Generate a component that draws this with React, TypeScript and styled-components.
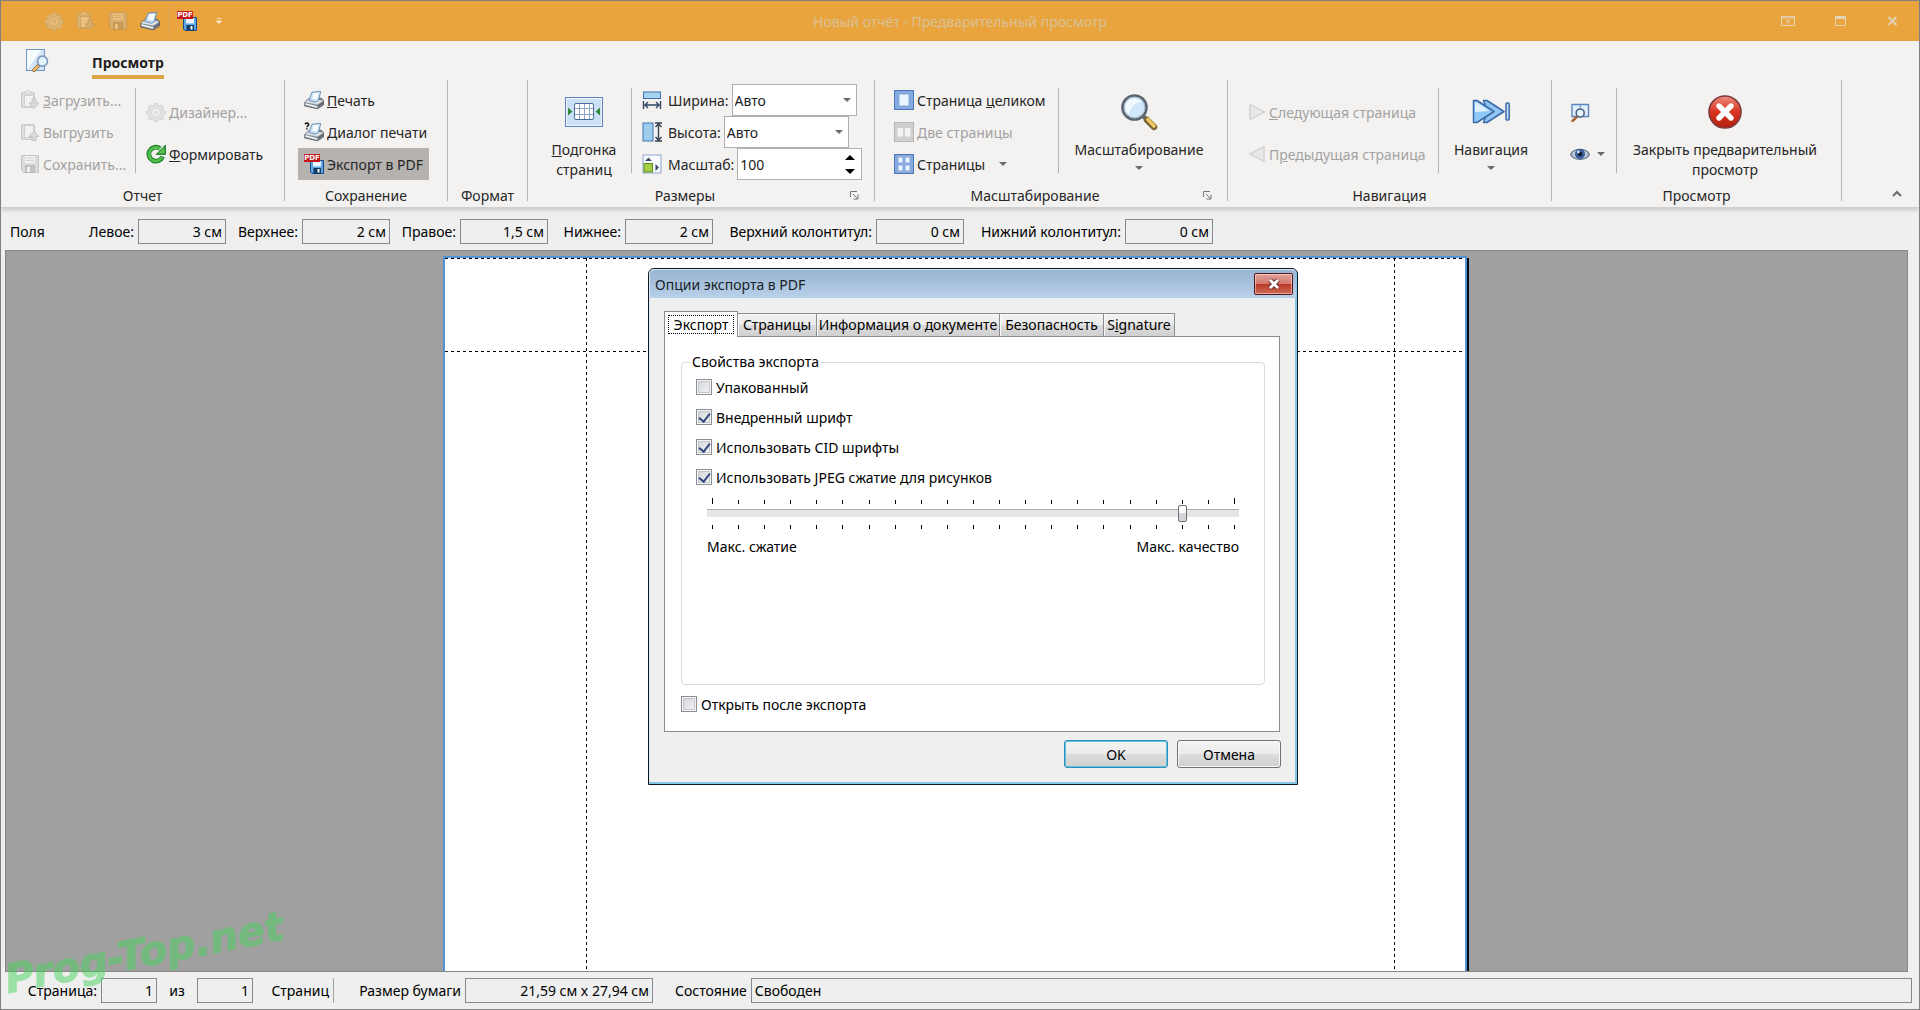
import React, { useState } from "react";
import styled, { createGlobalStyle, css } from "styled-components";

const uiFont = `"Noto Sans", "Open Sans", sans-serif`;

const GlobalStyle = createGlobalStyle`
  * { box-sizing: border-box; }
  body { margin: 0; background: #efefef; }
  button, input, select { font: inherit; color: inherit; margin: 0; }
  button { padding: 0; border: 0; background: none; cursor: default; }
`;

/* ---------- window frame ---------- */

const Window = styled.div`
  position: relative;
  display: flex;
  flex-direction: column;
  height: 100vh;
  overflow: hidden;
  border: 1px solid #808080;
  background: #efefef;
  font-family: ${uiFont};
  font-size: 14px;
  color: #262626;
`;

const TitleBar = styled.header`
  display: grid;
  grid-template-columns: 1fr auto 1fr;
  align-items: center;
  height: 40px;
  flex: none;
  background: #e9a43e;
`;

const QuickAccess = styled.div`
  display: flex;
  align-items: center;
  padding-left: 37px;
`;

const QuickButton = styled.button<{ $faded?: boolean }>`
  display: flex;
  justify-content: center;
  width: 32px;
  opacity: ${(p) => (p.$faded ? 0.35 : 1)};
`;

const QuickDivider = styled.span`
  width: 1px;
  height: 32px;
  margin: 0 2px;
  background: #dda85a;
`;

const WindowTitle = styled.h1`
  margin: 0;
  font-size: 14px;
  font-weight: 400;
  color: #d9c196;
`;

const WindowButtons = styled.div`
  display: flex;
  justify-content: flex-end;
  padding-right: 1px;
`;

const WindowButton = styled.button`
  display: flex;
  align-items: center;
  justify-content: center;
  width: 52px;
  height: 40px;
  color: #e3d3b5;
`;

/* ---------- ribbon ---------- */

const Ribbon = styled.section`
  flex: none;
  background: #f3f2f1;
  border-bottom: 1px solid #d0d0d0;
  box-shadow: 0 2px 4px rgba(0, 0, 0, 0.16);
  z-index: 1;
`;

const TabRow = styled.div`
  display: flex;
  height: 39px;
  padding: 0 0 1px 24px;
`;

const FileButton = styled.button`
  display: flex;
  align-items: center;
  width: 67px;
`;

const RibbonTab = styled.button`
  align-self: flex-end;
  height: 28px;
  border-bottom: 4px solid #dda548;
  font-size: 14px;
  font-weight: 700;
  line-height: 20px;
  color: #1c1c1c;
`;

const Groups = styled.div`
  display: flex;
  height: 127px;
`;

const Group = styled.div<{ $width: number }>`
  display: flex;
  flex-direction: column;
  flex: none;
  width: ${(p) => p.$width}px;
  margin-bottom: 6px;
  border-right: 1px solid #b5b5b5;
`;

const GroupBody = styled.div`
  display: flex;
  flex: none;
  height: 105px;
  padding-top: 4px;
`;

const GroupFooter = styled.div`
  display: flex;
  flex: none;
  align-items: center;
  height: 20px;
`;

const GroupTitle = styled.span`
  flex: 1;
  text-align: center;
`;

const Launcher = styled.button`
  display: flex;
  justify-content: center;
  width: 32px;
  padding-right: 8px;
`;

const Column = styled.div<{ $left: number; $width?: number; $pair?: boolean }>`
  display: flex;
  flex: none;
  flex-direction: column;
  align-items: flex-start;
  width: ${(p) => (p.$width ? `${p.$width}px` : "auto")};
  padding-left: ${(p) => p.$left}px;
  ${(p) => p.$pair && css`padding-top: 12px; gap: 10px;`}
`;

const Divider = styled.span`
  flex: none;
  width: 1px;
  height: 85px;
  margin-top: 4px;
  background: #b5b5b5;
`;

const SmallButton = styled.button<{ $active?: boolean }>`
  display: flex;
  align-items: center;
  gap: 3px;
  height: 32px;
  padding: 0 6px;
  white-space: nowrap;
  background: ${(p) => (p.$active ? "#b5b2af" : "transparent")};
  &:disabled { color: #a3a2a1; }
  &:disabled svg { filter: grayscale(1); opacity: 0.45; }
`;

const BigButton = styled.button<{ $width: number }>`
  display: flex;
  flex: none;
  flex-direction: column;
  align-items: center;
  width: ${(p) => p.$width}px;
  padding-top: 8px;
  line-height: 20px;
  text-align: center;
`;

const BigIcon = styled.span`
  display: flex;
  align-items: center;
  justify-content: center;
  height: 40px;
  margin-bottom: 8px;
`;

const Chevron = styled.span`
  width: 0;
  border: 4px solid transparent;
  border-top-color: #6b6b6b;
  border-bottom: 0;
  margin: 4px;
  ${BigButton} & { margin-top: 6px; }
`;

const SizeRow = styled.div`
  display: flex;
  align-items: center;
  gap: 3px;
  height: 32px;
  svg { margin-right: 3px; }
`;

const Field = styled.span`
  position: relative;
  display: flex;
  width: 125px;
  height: 32px;
  border: 1px solid #b0afae;
  background: #fff;
  color: #1c1c1c;
`;

const FieldSelect = styled.select`
  flex: 1;
  appearance: none;
  border: 0;
  padding: 0 2px;
  background: transparent;
`;

const FieldArrow = styled(Chevron)`
  position: absolute;
  right: 1px;
  top: 9px;
  pointer-events: none;
`;

const FieldInput = styled.input`
  flex: 1;
  min-width: 0;
  border: 0;
  padding: 0 2px;
  background: transparent;
`;

const Spinner = styled.span`
  display: flex;
  flex-direction: column;
  justify-content: center;
  gap: 9px;
  width: 21px;
`;

const SpinButton = styled.button<{ $up?: boolean }>`
  width: 0;
  margin-left: 5px;
  border: 5px solid transparent;
  ${(p) =>
    p.$up
      ? css`border-top: 0; border-bottom-color: #000;`
      : css`border-bottom: 0; border-top-color: #000;`}
`;

const CollapseButton = styled.button`
  align-self: flex-end;
  margin: 0 17px 6px auto;
`;

/* ---------- margins and status bars ---------- */

const MarginBar = styled.div`
  display: flex;
  flex: none;
  align-items: center;
  height: 42px;
  padding-top: 5px;
  padding-left: 9px;
  color: #000;
`;

const BarTitle = styled.span`
  width: 34px;
`;

const BarLabel = styled.label<{ $width?: number }>`
  display: flex;
  align-items: center;
  justify-content: flex-end;
  gap: 4px;
  width: ${(p) => (p.$width ? `${p.$width}px` : "auto")};
  white-space: nowrap;
`;

const Readout = styled.input<{ $width?: number; $left?: boolean }>`
  flex: ${(p) => (p.$width ? "none" : "1")};
  width: ${(p) => (p.$width ? `${p.$width}px` : "auto")};
  height: 25px;
  padding: 0 3px;
  border: 1px solid #868a90;
  border-radius: 0;
  background: #efefef;
  text-align: ${(p) => (p.$left ? "left" : "right")};
`;

const Canvas = styled.main`
  flex: 1;
  min-height: 0;
  margin: 0 11px 0 4px;
  padding: 5px 3px 0 0;
  overflow: hidden;
  border: 1px solid #868686;
  background: #a0a0a0;
`;

const dashX = "repeating-linear-gradient(90deg, #000 0 3px, transparent 3px 6px)";
const dashY = "repeating-linear-gradient(180deg, #000 0 3px, transparent 3px 6px)";

const Paper = styled.article`
  width: 1024px;
  height: 1320px;
  margin: 0 auto;
  border: 2px solid #5592d4;
  box-shadow: 2px 2px 0 #000a18;
  background:
    ${dashX} 0 0 / 100% 1px no-repeat,
    ${dashX} 0 93px / 100% 1px no-repeat,
    ${dashY} 141px 0 / 1px 100% no-repeat,
    ${dashY} calc(100% - 70px) 0 / 1px 100% no-repeat,
    #fff;
`;

const StatusBar = styled.footer`
  display: flex;
  flex: none;
  align-items: center;
  height: 37px;
  padding: 0 7px 0 28px;
  color: #000;
`;

const StatusText = styled.span<{ $width: number; $end?: boolean }>`
  width: ${(p) => p.$width}px;
  padding-right: ${(p) => (p.$end ? "4px" : "0")};
  text-align: ${(p) => (p.$end ? "right" : "center")};
  white-space: nowrap;
`;

const StatusDivider = styled.span`
  width: 1px;
  height: 25px;
  background: #a0a0a0;
`;

const StateLabel = styled(BarLabel)`
  flex: 1;
  padding-left: 22px;
`;

const Watermark = styled.span`
  position: absolute;
  left: 9px;
  bottom: 6px;
  transform: rotate(-11deg);
  transform-origin: left bottom;
  font: italic 700 40px/48px "DejaVu Sans", sans-serif;
  color: #48d25c;
  -webkit-text-stroke: 1px #48d25c;
  opacity: 0.5;
  pointer-events: none;
`;

/* ---------- export dialog ---------- */

const Dialog = styled.section`
  position: absolute;
  top: 267px;
  left: calc(50% - 312px);
  z-index: 2;
  width: 650px;
  border: 1px solid #0b1722;
  border-radius: 6px 6px 0 0;
  box-shadow: inset -2px -2px 0 #86c5e4, inset 1px 1px 0 #dbe7f3;
  background: #efefef;
  color: #000;
`;

const DialogBar = styled.header`
  display: flex;
  align-items: center;
  justify-content: space-between;
  height: 29px;
  margin: 0 1px;
  padding: 0 3px 0 5px;
  border-top: 1px solid #dbe7f3;
  border-radius: 5px 5px 0 0;
  background: linear-gradient(#98b4d1, #b9d0e9);
`;

const DialogTitle = styled.h2`
  margin: 0;
  font-size: 14px;
  font-weight: 400;
  color: #1a1f26;
`;

const CloseButton = styled.button`
  display: flex;
  align-items: center;
  justify-content: center;
  width: 39px;
  height: 22px;
  border: 1px solid #53141c;
  border-radius: 2px;
  box-shadow: inset 0 0 0 1px rgba(255, 255, 255, 0.45);
  background: linear-gradient(#e3a29a 0, #d4796e 48%, #b83a26 52%, #cf6a55 100%);
`;

const DialogBody = styled.div`
  padding: 13px 17px 16px 15px;
`;

const TabStrip = styled.div`
  display: flex;
  align-items: flex-end;
`;

const DialogTab = styled.button<{ $selected?: boolean; $width: number }>`
  width: ${(p) => p.$width}px;
  height: 23px;
  line-height: 22px;
  border: 1px solid #8a8c8f;
  border-left-width: 0;
  border-bottom: 0;
  background: linear-gradient(#f2f2f2, #ebebeb 48%, #dcdcdc 52%, #d0d0d0);
  box-shadow: inset 1px 1px 0 #fafafa;
  white-space: nowrap;
  ${(p) =>
    p.$selected &&
    css`
      position: relative;
      height: 26px;
      margin-bottom: -1px;
      padding: 3px;
      border-left-width: 1px;
      background: #fff;
      box-shadow: none;
      span { display: block; border: 1px dotted #000; line-height: 17px; }
    `}
`;

const Panel = styled.div`
  display: flex;
  flex-direction: column;
  height: 396px;
  padding: 15px 14px 18px 16px;
  border: 1px solid #8a8c8f;
  background: #fff;
`;

const OptionGroup = styled.fieldset`
  flex: 1;
  min-width: 0;
  margin: 0 0 10px;
  padding: 0 25px 0 14px;
  border: 1px solid #d9dadc;
  border-radius: 4px;
`;

const Legend = styled.legend`
  margin-left: -6px;
  padding: 0 2px;
  line-height: 20px;
`;

const CheckLabel = styled.label<{ $tall?: boolean }>`
  display: flex;
  align-items: center;
  gap: 4px;
  height: ${(p) => (p.$tall ? 30 : 18)}px;
`;

const CheckBox = styled.input`
  appearance: none;
  width: 16px;
  height: 16px;
  border: 1px solid #8c8f93;
  background: linear-gradient(135deg, #cfd2d6, #f7f7f7);
  box-shadow: inset 0 0 0 1px #f6f6f6, inset 0 0 0 2px #c4c8cd;
  display: grid;
  place-content: center;
  &:checked::after {
    content: "";
    width: 5px;
    height: 9px;
    margin-bottom: 2px;
    border: solid #36477f;
    border-width: 0 2px 2px 0;
    transform: rotate(38deg);
  }
`;

const Quality = styled.div`
  padding-left: 11px;
`;

const Ticks = styled.div<{ $top?: boolean }>`
  display: flex;
  align-items: flex-end;
  justify-content: space-between;
  height: 6px;
  padding: 0 4px 0 5px;
  margin-top: ${(p) => (p.$top ? "6px" : "1px")};
  i { width: 1px; height: 4px; background: #000; }
  ${(p) => p.$top && css`i:first-child, i:last-child { height: 6px; }`}
`;

const Slider = styled.input`
  display: block;
  appearance: none;
  width: 100%;
  height: 18px;
  margin: 0;
  background: linear-gradient(#a9abad 0 1px, #e6e6e6 1px) 0 5px / 100% 8px no-repeat;
  &::-webkit-slider-thumb {
    appearance: none;
    width: 9px;
    height: 17px;
    border: 1px solid #6e7073;
    border-radius: 2px;
    background: linear-gradient(#fafafa 50%, #d3d5d8 50%);
  }
`;

const SliderEnds = styled.div`
  display: flex;
  justify-content: space-between;
  margin-top: 8px;
  line-height: 20px;
`;

const DialogActions = styled.div`
  display: flex;
  justify-content: flex-end;
  gap: 9px;
  margin: 8px -1px 0 0;
`;

const ActionButton = styled.button<{ $primary?: boolean }>`
  width: 104px;
  height: 28px;
  border: 1px solid ${(p) => (p.$primary ? "#2f8cb5" : "#707274")};
  border-radius: 3px;
  box-shadow: inset 0 0 0 1px ${(p) => (p.$primary ? "#5cc6ea" : "#fafafa")};
  background: linear-gradient(#f3f3f3, #ebebeb 48%, #dddddd 52%, #cfcfcf);
`;

/* ---------- icons ---------- */

const Svg = ({ size = 20, children }: { size?: number; children: React.ReactNode }) => (
  <svg width={size} height={size} viewBox="0 0 20 20" fill="none" aria-hidden="true">
    {children}
  </svg>
);

const GearIcon = () => (
  <Svg>
    <path
      d="M8.500 1.500h3l.6 2 1.600.7 1.900-1 2.100 2.100-1 1.900.7 1.600 2 .6v2.400l-2 .6-.7 1.600 1 1.900-2.100 2.100-1.900-1-1.600.7-.6 2h-3l-.6-2-1.600-.7-1.900 1-2.100-2.100 1-1.900-.7-1.600-2-.6V9.400l2-.6.7-1.600-1-1.900 2.100-2.100 1.900 1 1.600-.7z"
      fill="#cfcfcf"
      stroke="#a8a8a8"
      strokeWidth="1"
    />
    <circle cx="10" cy="10.500" r="4.500" fill="#ececec" stroke="#b2b2b2" />
    <circle cx="10" cy="10.500" r="2" fill="#c4c4c4" />
  </Svg>
);

const PasteIcon = () => (
  <Svg>
    <rect x="1.500" y="2.500" width="13" height="15" rx="1.500" fill="#c9c9c9" stroke="#9c9c9c" />
    <rect x="5" y="1" width="6" height="3" rx="1" fill="#eee" stroke="#9c9c9c" />
    <rect x="4.500" y="5.500" width="9" height="11" fill="#f2f2f2" stroke="#a5a5a5" />
    <path d="M12 9h4v4h3l-5 5.500L9 13h3z" fill="#bdbdbd" stroke="#8f8f8f" />
  </Svg>
);

const UploadIcon = () => (
  <Svg>
    <rect x="1.500" y="2.500" width="13" height="15" rx="1.500" fill="#c9c9c9" stroke="#9c9c9c" />
    <rect x="4.500" y="3.500" width="9" height="12" fill="#f2f2f2" stroke="#a5a5a5" />
    <path d="M12 18.500h4v-4h3L14 9l-5 5.500h3z" fill="#bdbdbd" stroke="#8f8f8f" />
  </Svg>
);

const DiskIcon = () => (
  <Svg>
    <path d="M1.500 1.500h17v17h-15l-2-2z" fill="#c2c2c2" stroke="#8f8f8f" />
    <rect x="5" y="2" width="10" height="7" fill="#f1f1f1" />
    <path d="M6 4h8M6 6.500h8" stroke="#b0b0b0" />
    <rect x="5.500" y="11.500" width="9" height="7" fill="#8e8e8e" stroke="#777" />
    <rect x="7" y="13" width="3" height="5" fill="#eee" />
  </Svg>
);

const PrinterShape = () => (
  <>
    <path d="M.8 12.200L5 8.500l12-.5 2.500 2.500v4.500l-6 3.800L.8 16z" fill="#8d949b" stroke="#4c5259" strokeWidth=".8" />
    <path d="M1 12.200L5.500 8.500 19 10.800l-5.500 3.700z" fill="#dfe3e7" />
    <path d="M4.800 10.500L8 2.200l8.800-.9-2.300 9-3 1.900z" fill="#c3dff5" stroke="#5b7ea3" strokeWidth=".8" />
    <path d="M9 3.300l6-.6-1.800 6.800-5-.5z" fill="#f5fbff" />
    <path d="M1.500 14l11.500 3" stroke="#f1f3f5" strokeWidth="1.600" />
    <path d="M14 16.300l5-3.300" stroke="#5f666e" strokeWidth="1.800" />
  </>
);

const PrinterIcon = () => (
  <Svg>
    <PrinterShape />
  </Svg>
);

const PrintDialogIcon = () => (
  <Svg>
    <PrinterShape />
    <path d="M1 2.200C1.400.600 5 .700 4.600 2.800 4.400 3.900 2.900 3.800 2.900 5.200M2.900 6.200v1.200" stroke="#1b1b1b" strokeWidth="1.600" />
  </Svg>
);

const PdfBadge = styled.span`
  position: relative;
  display: block;
  width: 20px;
  height: 20px;
  b {
    position: absolute;
    left: 0;
    top: 0;
    width: 16px;
    height: 8px;
    background: #c4161c;
    color: #fff;
    font: 700 7px/8px "DejaVu Sans", sans-serif;
    text-align: center;
  }
`;

const PdfIcon = () => (
  <PdfBadge>
    <Svg>
      <path d="M6.500 6.500h13v13h-11.500l-1.500-1.500z" fill="#5da6e4" stroke="#174a86" />
      <path d="M9 7h8v5.500H9z" fill="#e8f5ff" />
      <rect x="9.500" y="14" width="7.500" height="5.500" fill="#123a63" />
      <rect x="13.500" y="15" width="2" height="3.500" fill="#fff" />
    </Svg>
    <b>PDF</b>
  </PdfBadge>
);

const PreviewIcon = () => (
  <svg width="24" height="24" viewBox="0 0 24 24" fill="none" aria-hidden="true">
    <rect x="1.500" y="1.500" width="18" height="21" fill="#d3e6f8" stroke="#7097c7" />
    <path d="M2 22V2h14z" fill="#f6fbff" />
    <path d="M13.500 17.500L9 22.300" stroke="#8a6a3a" strokeWidth="3.600" strokeLinecap="round" />
    <path d="M13 18l-4 4.200" stroke="#f0c26c" strokeWidth="2" strokeLinecap="round" />
    <circle cx="17.500" cy="13.200" r="5" fill="#e3f2fc" stroke="#7e9bbd" strokeWidth="1.700" />
  </svg>
);

const RefreshIcon = () => (
  <Svg>
    <path d="M16.500 12.500A7 7 0 1 1 14 4.500" stroke="#1d7f27" strokeWidth="4.800" />
    <path d="M19.500 1v9.500h-9.500z" fill="#2f9a35" stroke="#1b7525" strokeWidth=".8" />
    <path d="M16 13.200A6.800 6.800 0 1 1 14 4.900" stroke="#52bf4b" strokeWidth="2.800" />
    <path d="M18.300 3.500v5.800h-5.800z" fill="#58c152" />
  </Svg>
);

const FitIcon = () => (
  <svg width="38" height="30" viewBox="0 0 38 30" fill="none" aria-hidden="true">
    <rect x=".500" y=".500" width="37" height="29" fill="#cbe0f7" stroke="#5a83bd" />
    <rect x="1.500" y="1.500" width="35" height="27" stroke="#f1f8ff" />
    <path d="M3 10.500l4.500 4L3 18.500zM35 10.500l-4.500 4 4.500 4z" fill="#2f8a34" />
    <rect x="9.500" y="6.500" width="19" height="16" rx="1.500" fill="#fff" stroke="#4a6a9c" />
    <path d="M14.500 7v15M19.500 7v15M24.500 7v15M10 11.500h18M10 17.500h18" stroke="#8ea4c6" />
  </svg>
);

const WidthIcon = () => (
  <Svg>
    <rect x="1.500" y="2" width="17" height="6.500" fill="#a8d4f1" stroke="#3f74ae" />
    <path d="M1.500 11v8M18.500 11v8M3 15h14M6 12l-3 3 3 3M14 12l3 3-3 3" stroke="#2f4560" strokeWidth="1.400" />
  </Svg>
);

const HeightIcon = () => (
  <Svg>
    <rect x="1" y="1" width="10" height="18" fill="#9dceee" stroke="#3f74ae" />
    <path d="M13 1h7M13 19h7M16.500 2v16M13.500 5l3-3 3 3M13.500 15l3 3 3-3" stroke="#33404f" strokeWidth="1.400" />
  </Svg>
);

const ScaleIcon = () => (
  <Svg>
    <rect x="1" y="1" width="18" height="18" fill="#f7fbff" stroke="#8ea6cc" />
    <rect x="2" y="9.500" width="8.500" height="8.500" fill="#a5cf45" stroke="#5f8c1e" />
    <path d="M3 7l3.500-3.500L10 7zM13.500 10l3.500 3.500-3.500 3.500z" fill="#3d4c63" />
  </Svg>
);

const PagesIcon = ({ count }: { count: 1 | 2 | 4 }) => (
  <Svg>
    <rect x=".500" y=".500" width="19" height="19" fill="#86aadd" stroke="#4a78b8" />
    {count === 1 && <rect x="5.500" y="4.500" width="9" height="11" fill="#edf5ff" />}
    {count === 2 && <path d="M3.500 6H9v8.500H3.500zM11 6h5.500v8.500H11z" fill="#edf5ff" />}
    {count === 4 && (
      <path d="M4.500 3.500h4v5h-4zM11.500 3.500h4v5h-4zM4.500 11.500h4v5h-4zM11.500 11.500h4v5h-4z" fill="#edf5ff" />
    )}
  </Svg>
);

const MagnifierIcon = () => (
  <svg width="38" height="38" viewBox="0 0 38 38" fill="none" aria-hidden="true">
    <path d="M23 23l4 4" stroke="#5f6a78" strokeWidth="4" />
    <path d="M27 27l7 7" stroke="#7a6436" strokeWidth="6.400" strokeLinecap="round" />
    <path d="M28 26.500l6 6.500" stroke="#f0c95f" strokeWidth="3.600" strokeLinecap="round" />
    <circle cx="14.500" cy="14.500" r="12" fill="#cfe8f9" stroke="#5c6572" strokeWidth="2.600" />
    <circle cx="14.500" cy="14.500" r="10.300" stroke="#a9b9c8" strokeWidth="1" />
    <path d="M5 14.500a9.500 9.500 0 0 1 17-5.500c-6 0-11 3-13 12.500-2.500-2-4-4-4-7z" fill="#f0f9ff" />
  </svg>
);

const TriangleIcon = ({ back }: { back?: boolean }) => (
  <svg width="18" height="18" viewBox="0 0 18 18" aria-hidden="true">
    <path
      d={back ? "M16 1.500v15L1.500 9z" : "M2 1.500v15L16.500 9z"}
      fill="#dcdcdc"
      stroke="#a8a8a8"
      strokeWidth="1.400"
      strokeLinejoin="round"
    />
  </svg>
);

const NavigateIcon = () => (
  <svg width="38" height="26" viewBox="0 0 38 26" aria-hidden="true">
    <g stroke="#3c6aa8" strokeWidth="1.500" strokeLinejoin="round">
      <path d="M11.500 1.500h3.500L32 12.500 15 23.500h-3.500l4-11z" fill="#8fc4f3" />
      <path d="M1.500 1.500H5L22 12.500 5 23.500H1.500z" fill="#8fc8f8" />
      <rect x="34" y="4" width="3.200" height="17" rx="1" fill="#c6e3fb" />
    </g>
    <path d="M3 3.500h2L17.500 12 3 13z" fill="#dff1ff" />
  </svg>
);

const BookSearchIcon = () => (
  <Svg>
    <path d="M2 2.500h16.500v12H2z" fill="#e2eefb" stroke="#5e86bb" strokeWidth="1.400" />
    <path d="M10.200 2.500v6" stroke="#5e86bb" />
    <path d="M7 14.500L2.500 19" stroke="#a9683f" strokeWidth="2.600" strokeLinecap="round" />
    <circle cx="10.200" cy="11" r="4" fill="#e9f6ff" stroke="#4c6583" strokeWidth="1.600" />
  </Svg>
);

const EyeIcon = () => (
  <Svg>
    <path d="M.5 10.500C4 3.500 16 3.500 19.500 10.500 16 17 4 17 .5 10.500z" fill="#b9c6d6" stroke="#596b83" strokeWidth="1.200" />
    <circle cx="10" cy="10" r="5" fill="#3c5f9c" />
    <circle cx="10" cy="10" r="2.300" fill="#101b31" />
    <circle cx="8.300" cy="8" r="1.400" fill="#dbe9fb" />
  </Svg>
);

const StopIcon = () => (
  <svg width="34" height="34" viewBox="0 0 34 34" aria-hidden="true">
    <defs>
      <linearGradient id="stop" x1="0" y1="0" x2="0" y2="1">
        <stop offset="0" stopColor="#ef8b7d" />
        <stop offset=".5" stopColor="#d8341f" />
        <stop offset="1" stopColor="#b51f10" />
      </linearGradient>
    </defs>
    <circle cx="17" cy="17" r="16" fill="url(#stop)" stroke="#7d3a3c" strokeWidth="1.600" />
    <path d="M11 11l12 12M23 11L11 23" stroke="#fff" strokeWidth="5.400" strokeLinecap="round" />
  </svg>
);

const LauncherIcon = () => (
  <svg width="9" height="9" viewBox="0 0 9 9" fill="none" stroke="#777" aria-hidden="true">
    <path d="M.5 6V.5H7M3 3l4.500 4.500M8 3.500V8H3.500" />
  </svg>
);

/* ---------- view ---------- */

const MARGINS: [string, string, number][] = [
  ["Левое:", "3 см", 182],
  ["Верхнее:", "2 см", 164],
  ["Правое:", "1,5 см", 158],
  ["Нижнее:", "2 см", 165],
  ["Верхний колонтитул:", "0 см", 251],
  ["Нижний колонтитул:", "0 см", 249],
];

const TABS: [string, number][] = [
  ["Экспорт", 74],
  ["Страницы", 79],
  ["Информация о документе", 183],
  ["Безопасность", 104],
];

const OPTIONS: [string, boolean][] = [
  ["Упакованный", false],
  ["Внедренный шрифт", true],
  ["Использовать CID шрифты", true],
  ["Использовать JPEG сжатие для рисунков", true],
];

const tickMarks = Array.from({ length: 21 }, (_, i) => <i key={i} />);

function ExportDialog() {
  const [quality, setQuality] = useState(90);
  return (
    <Dialog role="dialog" aria-labelledby="export-title">
      <DialogBar>
        <DialogTitle id="export-title">Опции экспорта в PDF</DialogTitle>
        <CloseButton aria-label="Закрыть">
          <svg width="14" height="12" viewBox="0 0 14 12" aria-hidden="true">
            <path d="M3 2l8 8M11 2l-8 8" stroke="#5b2a2a" strokeWidth="4.600" />
            <path d="M3 2l8 8M11 2l-8 8" stroke="#fff" strokeWidth="3" />
          </svg>
        </CloseButton>
      </DialogBar>
      <DialogBody>
        <TabStrip role="tablist">
          {TABS.map(([name, width], i) => (
            <DialogTab key={name} role="tab" $selected={i === 0} $width={width} aria-selected={i === 0}>
              <span>{name}</span>
            </DialogTab>
          ))}
          <DialogTab role="tab" $width={71} aria-selected={false}>
            S<u>i</u>gnature
          </DialogTab>
        </TabStrip>
        <Panel role="tabpanel">
          <OptionGroup>
            <Legend>Свойства экспорта</Legend>
            {OPTIONS.map(([name, on]) => (
              <CheckLabel key={name} $tall>
                <CheckBox type="checkbox" defaultChecked={on} />
                {name}
              </CheckLabel>
            ))}
            <Quality>
              <Ticks $top>{tickMarks}</Ticks>
              <Slider
                type="range"
                min={0}
                max={100}
                step={5}
                value={quality}
                aria-label="Качество JPEG"
                onChange={(e) => setQuality(Number(e.target.value))}
              />
              <Ticks>{tickMarks}</Ticks>
              <SliderEnds>
                <span>Макс. сжатие</span>
                <span>Макс. качество</span>
              </SliderEnds>
            </Quality>
          </OptionGroup>
          <CheckLabel>
            <CheckBox type="checkbox" />
            Открыть после экспорта
          </CheckLabel>
        </Panel>
        <DialogActions>
          <ActionButton $primary>OK</ActionButton>
          <ActionButton>Отмена</ActionButton>
        </DialogActions>
      </DialogBody>
    </Dialog>
  );
}

export default function App() {
  return (
    <Window>
      <GlobalStyle />
      <TitleBar>
        <QuickAccess>
          <QuickButton $faded aria-label="Дизайнер"><GearIcon /></QuickButton>
          <QuickButton $faded aria-label="Загрузить"><PasteIcon /></QuickButton>
          <QuickButton $faded aria-label="Сохранить"><DiskIcon /></QuickButton>
          <QuickButton aria-label="Печать"><PrinterIcon /></QuickButton>
          <QuickDivider />
          <QuickButton aria-label="Экспорт в PDF"><PdfIcon /></QuickButton>
          <QuickButton aria-label="Настройка панели">
            <svg width="6" height="8" viewBox="0 0 6 8" aria-hidden="true">
              <path d="M.5 1.500h5M.5 4h5L3 6.500z" stroke="#fbeed8" fill="#fbeed8" strokeWidth=".8" />
            </svg>
          </QuickButton>
        </QuickAccess>
        <WindowTitle>Новый отчёт - Предварительный просмотр</WindowTitle>
        <WindowButtons>
          <WindowButton aria-label="Параметры ленты">
            <svg width="14" height="10" viewBox="0 0 14 10" fill="none" stroke="currentColor" aria-hidden="true">
              <path d="M.5.5h13v9H.5zM.5 2h13M7 8.500V4M4.500 6L7 3.800 9.500 6" />
            </svg>
          </WindowButton>
          <WindowButton aria-label="Развернуть">
            <svg width="11" height="10" viewBox="0 0 11 10" fill="none" stroke="currentColor" aria-hidden="true">
              <path d="M.5.5h10v9H.5zM.5 1.500h10M.5 2.500h10" />
            </svg>
          </WindowButton>
          <WindowButton aria-label="Закрыть">
            <svg width="11" height="10" viewBox="0 0 11 10" stroke="currentColor" strokeWidth="2" aria-hidden="true">
              <path d="M1.500 1l8 8M9.500 1l-8 8" />
            </svg>
          </WindowButton>
        </WindowButtons>
      </TitleBar>

      <Ribbon>
        <TabRow>
          <FileButton aria-label="Файл"><PreviewIcon /></FileButton>
          <RibbonTab>Просмотр</RibbonTab>
        </TabRow>
        <Groups>
          <Group $width={284}>
            <GroupBody>
              <Column $left={13} $width={134}>
                <SmallButton disabled><PasteIcon /><span><u>З</u>агрузить...</span></SmallButton>
                <SmallButton disabled><UploadIcon /><span>Выгрузить</span></SmallButton>
                <SmallButton disabled><DiskIcon /><span>Сохранить...</span></SmallButton>
              </Column>
              <Divider />
              <Column $left={4} $pair>
                <SmallButton disabled><GearIcon /><span><u>Д</u>изайнер...</span></SmallButton>
                <SmallButton><RefreshIcon /><span><u>Ф</u>ормировать</span></SmallButton>
              </Column>
            </GroupBody>
            <GroupFooter><GroupTitle>Отчет</GroupTitle></GroupFooter>
          </Group>

          <Group $width={163}>
            <GroupBody>
              <Column $left={13}>
                <SmallButton><PrinterIcon /><span><u>П</u>ечать</span></SmallButton>
                <SmallButton><PrintDialogIcon /><span>Диалог печати</span></SmallButton>
                <SmallButton $active><PdfIcon /><span>Экспорт в PDF</span></SmallButton>
              </Column>
            </GroupBody>
            <GroupFooter><GroupTitle>Сохранение</GroupTitle></GroupFooter>
          </Group>

          <Group $width={80}>
            <GroupBody />
            <GroupFooter><GroupTitle>Формат</GroupTitle></GroupFooter>
          </Group>

          <Group $width={347}>
            <GroupBody>
              <Column $left={9} $width={103}>
                <BigButton $width={94}>
                  <BigIcon><FitIcon /></BigIcon>
                  <span><u>П</u>одгонка<br />страниц</span>
                </BigButton>
              </Column>
              <Divider />
              <Column $left={10}>
                <SizeRow>
                  <WidthIcon />
                  <label htmlFor="width">Ширина:</label>
                  <Field>
                    <FieldSelect id="width"><option>Авто</option></FieldSelect>
                    <FieldArrow />
                  </Field>
                </SizeRow>
                <SizeRow>
                  <HeightIcon />
                  <label htmlFor="height">Высота:</label>
                  <Field>
                    <FieldSelect id="height"><option>Авто</option></FieldSelect>
                    <FieldArrow />
                  </Field>
                </SizeRow>
                <SizeRow>
                  <ScaleIcon />
                  <label htmlFor="scale">Масштаб:</label>
                  <Field>
                    <FieldInput id="scale" defaultValue="100" />
                    <Spinner>
                      <SpinButton $up aria-label="Увеличить" />
                      <SpinButton aria-label="Уменьшить" />
                    </Spinner>
                  </Field>
                </SizeRow>
              </Column>
            </GroupBody>
            <GroupFooter>
              <GroupTitle>Размеры</GroupTitle>
              <Launcher aria-label="Размеры: параметры"><LauncherIcon /></Launcher>
            </GroupFooter>
          </Group>

          <Group $width={353}>
            <GroupBody>
              <Column $left={13} $width={183}>
                <SmallButton><PagesIcon count={1} /><span>Страница <u>ц</u>еликом</span></SmallButton>
                <SmallButton disabled><PagesIcon count={2} /><span><u>Д</u>ве страницы</span></SmallButton>
                <SmallButton><PagesIcon count={4} /><span>Страницы</span>&nbsp;<Chevron /></SmallButton>
              </Column>
              <Divider />
              <BigButton $width={160}>
                <BigIcon><MagnifierIcon /></BigIcon>
                <span>Масштабирование</span>
                <Chevron />
              </BigButton>
            </GroupBody>
            <GroupFooter>
              <GroupTitle>Масштабирование</GroupTitle>
              <Launcher aria-label="Масштабирование: параметры"><LauncherIcon /></Launcher>
            </GroupFooter>
          </Group>

          <Group $width={324}>
            <GroupBody>
              <Column $left={14} $width={210} $pair>
                <SmallButton disabled><TriangleIcon /><span><u>С</u>ледующая страница</span></SmallButton>
                <SmallButton disabled><TriangleIcon back /><span>П<u>р</u>едыдущая страница</span></SmallButton>
              </Column>
              <Divider />
              <BigButton $width={104}>
                <BigIcon><NavigateIcon /></BigIcon>
                <span>Навигация</span>
                <Chevron />
              </BigButton>
            </GroupBody>
            <GroupFooter><GroupTitle>Навигация</GroupTitle></GroupFooter>
          </Group>

          <Group $width={290}>
            <GroupBody>
              <Column $left={12} $width={64} $pair>
                <SmallButton aria-label="Поиск"><BookSearchIcon /></SmallButton>
                <SmallButton aria-label="Вид"><EyeIcon /><Chevron /></SmallButton>
              </Column>
              <Divider />
              <BigButton $width={216}>
                <BigIcon><StopIcon /></BigIcon>
                <span>Закрыть предварительный<br />просмотр</span>
              </BigButton>
            </GroupBody>
            <GroupFooter><GroupTitle>Просмотр</GroupTitle></GroupFooter>
          </Group>

          <CollapseButton aria-label="Свернуть ленту">
            <svg width="10" height="7" viewBox="0 0 10 7" fill="none" stroke="#6b6b6b" strokeWidth="2" aria-hidden="true">
              <path d="M1 6l4-4 4 4" />
            </svg>
          </CollapseButton>
        </Groups>
      </Ribbon>

      <MarginBar>
        <BarTitle>Поля</BarTitle>
        {MARGINS.map(([name, value, width]) => (
          <BarLabel key={name} $width={width}>
            {name}
            <Readout $width={88} defaultValue={value} />
          </BarLabel>
        ))}
      </MarginBar>

      <Canvas>
        <Paper />
      </Canvas>

      <StatusBar>
        <BarLabel $width={128}>
          Страница:
          <Readout $width={56} defaultValue="1" />
        </BarLabel>
        <StatusText $width={40}>из</StatusText>
        <Readout $width={56} defaultValue="1" aria-label="Страниц" />
        <StatusText $width={80} $end>Страниц</StatusText>
        <StatusDivider />
        <BarLabel $width={319}>
          Размер бумаги
          <Readout $width={188} defaultValue="21,59 см x 27,94 см" />
        </BarLabel>
        <StateLabel>
          Состояние
          <Readout $left defaultValue="Свободен" />
        </StateLabel>
      </StatusBar>

      <Watermark>Prog-Top.net</Watermark>
      <ExportDialog />
    </Window>
  );
}
